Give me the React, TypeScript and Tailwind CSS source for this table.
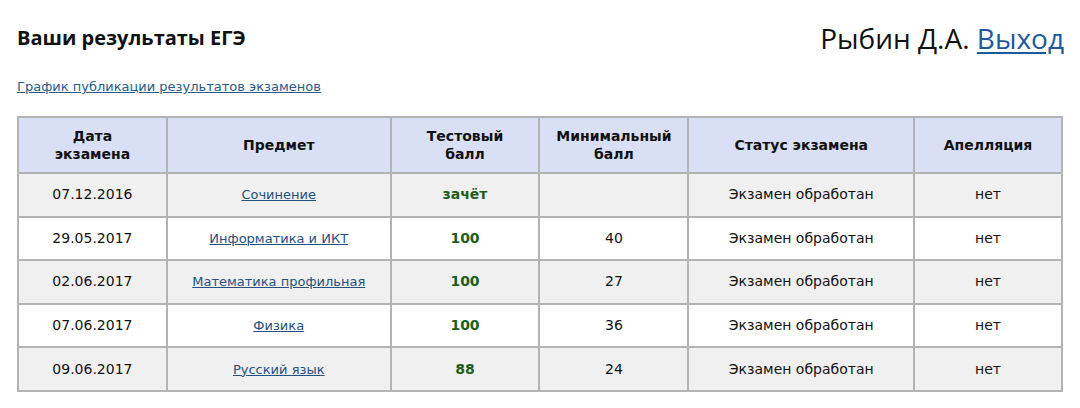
import React from "react";

type Row = {
  date: string;
  subject: string;
  score: string;
  min: string;
  status: string;
  appeal: string;
};

const rows: Row[] = [
  { date: "07.12.2016", subject: "Сочинение", score: "зачёт", min: "", status: "Экзамен обработан", appeal: "нет" },
  { date: "29.05.2017", subject: "Информатика и ИКТ", score: "100", min: "40", status: "Экзамен обработан", appeal: "нет" },
  { date: "02.06.2017", subject: "Математика профильная", score: "100", min: "27", status: "Экзамен обработан", appeal: "нет" },
  { date: "07.06.2017", subject: "Физика", score: "100", min: "36", status: "Экзамен обработан", appeal: "нет" },
  { date: "09.06.2017", subject: "Русский язык", score: "88", min: "24", status: "Экзамен обработан", appeal: "нет" },
];

const cell = "border-2 border-[#b3b3b3] text-center align-middle px-2";

const App: React.FC = () => {
  return (
    <div className="w-[1080px] h-[408px] bg-white px-[17px] overflow-hidden font-['DejaVu_Sans',Verdana,sans-serif] text-[#111]">
      <div className="flex items-start justify-between pt-[21px]">
        <h1 className="mt-[2px] font-['Open_Sans',sans-serif] font-bold text-[20px] leading-[30px] text-[#111]">
          Ваши результаты ЕГЭ
        </h1>
        <div className="font-['Open_Sans',sans-serif] text-[28px] leading-[34px] text-[#111] -mr-[1px]">
          Рыбин Д.А.{" "}
          <a href="#" className="text-[#1c5a9b] underline underline-offset-[3px] decoration-[2px]">
            Выход
          </a>
        </div>
      </div>

      <a href="#" className="block mt-[24px] text-[13px] leading-[16px] text-[#285b8b] underline">
        График публикации результатов экзаменов
      </a>

      <table className="mt-[21px] w-[1046px] border-collapse text-[14px]">
        <thead>
          <tr className="bg-[#d9e0f6] h-[56px] font-bold leading-[18px]">
            <th className={`${cell} w-[149px]`}>Дата<br />экзамена</th>
            <th className={`${cell} w-[224px]`}>Предмет</th>
            <th className={`${cell} w-[149px]`}>Тестовый<br />балл</th>
            <th className={`${cell} w-[149px]`}>Минимальный<br />балл</th>
            <th className={`${cell} w-[226px]`}>Статус экзамена</th>
            <th className={`${cell} w-[148px]`}>Апелляция</th>
          </tr>
        </thead>
        <tbody>
          {rows.map((r, i) => (
            <tr key={r.date} className={`h-[43.6px] ${i % 2 === 0 ? "bg-[#f0f0f0]" : "bg-white"}`}>
              <td className={cell}>{r.date}</td>
              <td className={cell}>
                <a href="#" className="text-[13px] text-[#23507f] underline">{r.subject}</a>
              </td>
              <td className={`${cell} font-bold text-[#1d5e1d]`}>{r.score}</td>
              <td className={cell}>{r.min}</td>
              <td className={cell}>{r.status}</td>
              <td className={cell}>{r.appeal}</td>
            </tr>
          ))}
        </tbody>
      </table>
    </div>
  );
};

export default App;
